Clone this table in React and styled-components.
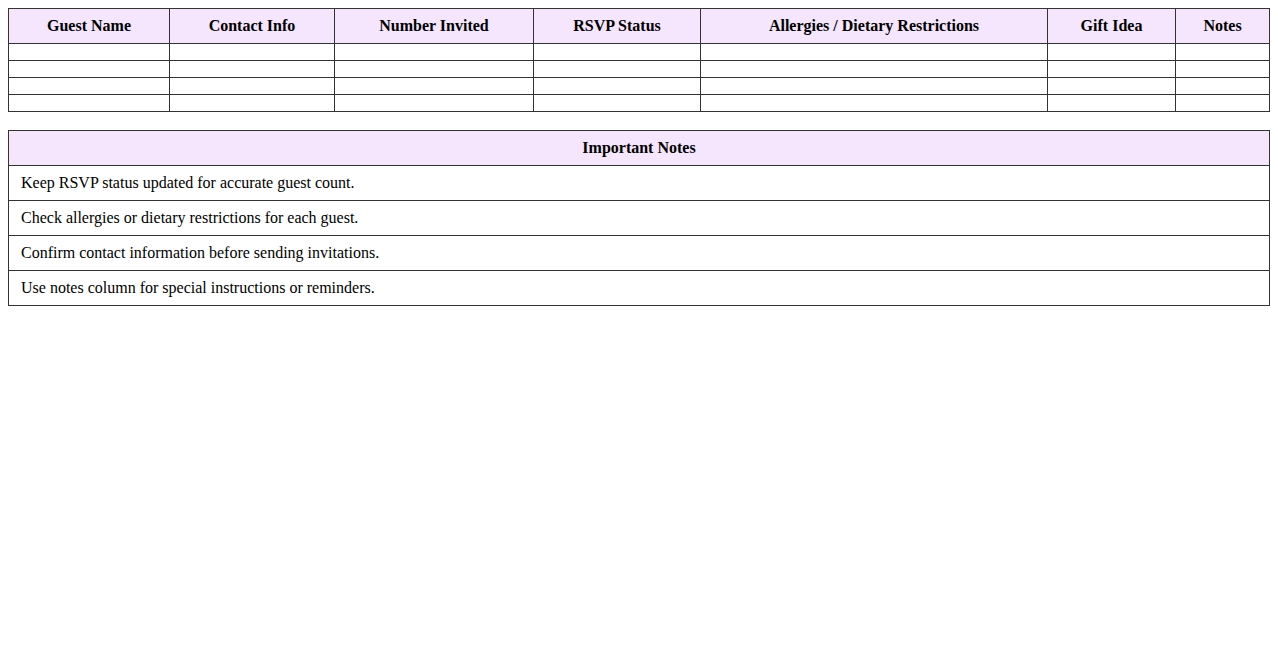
import styled, { createGlobalStyle } from 'styled-components';

const GlobalStyle = createGlobalStyle`
    body {
        margin: 8px;
        font-family: "Liberation Serif", "Times New Roman", serif;
        font-size: 16px;
        color: #000;
        background: #fff;
    }
`

const Table = styled.table`
    width: 100%;
    border-collapse: collapse;
    table-layout: ${props => props.fixed ? 'fixed' : 'auto'};
    margin-bottom: ${props => props.gap || 0}px;

    th, td {
        border: 1px solid #333;
        padding: 8px;
        text-align: center;
    }

    th {
        background: #f5e6fd;
        font-weight: bold;
    }
`

const Col = styled.col`
    width: ${props => props.w ? `${props.w}px` : 'auto'};
`

const NoteCell = styled.td`
    && {
        text-align: left;
        padding: 8px 12px;
    }
`

const columns = [
    { title: 'Guest Name', w: 161 },
    { title: 'Contact Info', w: 165 },
    { title: 'Number Invited', w: 199 },
    { title: 'RSVP Status', w: 167 },
    { title: 'Allergies / Dietary Restrictions', w: 347 },
    { title: 'Gift Idea', w: 128 },
    { title: 'Notes' },
]

const notes = [
    'Keep RSVP status updated for accurate guest count.',
    'Check allergies or dietary restrictions for each guest.',
    'Confirm contact information before sending invitations.',
    'Use notes column for special instructions or reminders.',
]

export default function App() {
    return (
        <>
            <GlobalStyle />
            <Table gap={18} fixed>
                <colgroup>
                    {columns.map(c => <Col key={c.title} w={c.w} />)}
                </colgroup>
                <thead>
                    <tr>
                        {columns.map(c => <th key={c.title}>{c.title}</th>)}
                    </tr>
                </thead>
                <tbody>
                    {[0, 1, 2, 3].map(r => (
                        <tr key={r}>
                            {columns.map(c => <td key={c.title}></td>)}
                        </tr>
                    ))}
                </tbody>
            </Table>
            <Table>
                <thead>
                    <tr><th>Important Notes</th></tr>
                </thead>
                <tbody>
                    {notes.map(n => (
                        <tr key={n}><NoteCell>{n}</NoteCell></tr>
                    ))}
                </tbody>
            </Table>
        </>
    )
}
